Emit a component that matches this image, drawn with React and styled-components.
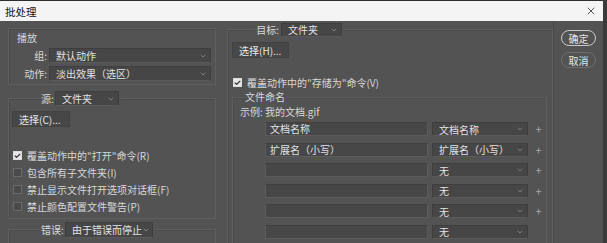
import React from 'react';
import styled, { createGlobalStyle } from 'styled-components';
import { ChevronDown, X, Check } from 'lucide-react';

const GlobalStyle = createGlobalStyle`
  html, body { margin: 0; padding: 0; background: #535353; }
  body { font-family: "Noto Sans CJK SC", "Noto Sans", sans-serif; }
  * { box-sizing: border-box; }
`;

const Window = styled.div`
  width: 607px;
  height: 243px;
  overflow: hidden;
  background: #535353;
  color: #d8d8d8;
  font-size: 10px;
  border-right: 4px solid #3a3a3a;
  display: flex;
  flex-direction: column;
`;

const TitleBar = styled.div`
  height: 21px;
  flex: none;
  background: #f4f4f4;
  border-top: 1px solid #2e2e2e;
  display: flex;
  align-items: center;
  justify-content: space-between;
  padding: 0 6px 0 5px;
  color: #111;
  font-size: 10.5px;
`;

const Body = styled.div`
  flex: 1;
  display: flex;
  padding-left: 8px;
`;

const LeftCol = styled.div`
  width: 208px;
  flex: none;
  display: flex;
  flex-direction: column;
`;

const RightCol = styled.div`
  width: 326px;
  margin-left: 11px;
  flex: none;
`;

const ButtonCol = styled.div`
  flex: 1;
  border-left: 1px solid #484848;
  display: flex;
  flex-direction: column;
  align-items: center;
  padding-top: 9px;
  gap: 6px;
`;

const Group = styled.div`
  margin-top: 7px;
  height: 57px;
  border: 1px solid #5f5f5f;
  box-shadow: inset 1px 1px 0 #4a4a4a;
  padding: 2px 0 0 8px;
`;

const GroupTitle = styled.div`
  height: 14px;
  line-height: 14px;
  margin-bottom: 3px;
`;

const FormRow = styled.div`
  display: flex;
  align-items: center;
  height: 15px;
  margin-bottom: 3px;
`;

const Label = styled.span`
  width: ${p => p.$w}px;
  text-align: right;
  padding-right: 2px;
  white-space: nowrap;
`;

const Frame = styled.fieldset`
  margin: ${p => p.$mt || 0}px ${p => p.$mr || 0}px 0 ${p => p.$ml || 0}px;
  padding: 0 0 0 ${p => p.$pl || 4}px;
  border: 1px solid #5f5f5f;
  box-shadow: inset 1px 1px 0 #4a4a4a;
  height: ${p => p.$h}px;
  min-width: 0;
`;

const Legend = styled.legend`
  margin-left: ${p => p.$ml}px;
  padding: 0 2px 0 0;
  display: flex;
  align-items: center;
  height: ${p => p.$h || 15}px;
  line-height: ${p => p.$h || 15}px;
  background: #535353;
`;

const SelectBox = styled.div`
  width: ${p => p.$w}px;
  height: ${p => p.$h || 15}px;
  background: #464646;
  border: 1px solid #3e3e3e;
  border-bottom-color: #5a5a5a;
  display: flex;
  align-items: center;
  justify-content: space-between;
  padding: 0 3px 0 6px;
  color: #e2e2e2;
  white-space: nowrap;
  svg { color: #9a9a9a; flex: none; }
`;

const Select = ({ w, h, children }) => (
  <SelectBox $w={w} $h={h}>
    <span>{children}</span>
    <ChevronDown size={8} strokeWidth={2} />
  </SelectBox>
);

const FlatButton = styled.div`
  width: ${p => p.$w}px;
  height: 16px;
  background: #474747;
  border: 1px solid #424242;
  display: flex;
  align-items: center;
  padding-left: 6px;
  color: #e6e6e6;
  margin-top: ${p => p.$mt}px;
`;

const CheckRow = styled.div`
  display: flex;
  align-items: center;
  height: 17px;
  gap: 5px;
  padding-left: 1px;
  margin-top: ${p => p.$mt || 0}px;
`;

const Box = styled.span`
  width: 9px;
  height: 9px;
  flex: none;
  border: 1px solid ${p => (p.$on ? '#dcdcdc' : '#6a6a6a')};
  background: ${p => (p.$on ? '#e8e8e8' : '#4a4a4a')};
  display: flex;
  align-items: center;
  justify-content: center;
  svg { color: #333; }
`;

const CheckItem = ({ on, mt, children }) => (
  <CheckRow $mt={mt}>
    <Box $on={on}>{on && <Check size={8} strokeWidth={4} />}</Box>
    <span>{children}</span>
  </CheckRow>
);

const Checks = styled.div`
  margin-top: 20px;
  display: flex;
  flex-direction: column;
`;

const Example = styled.div`
  height: 13px;
  line-height: 13px;
  margin-top: 2px;
  padding-left: 3px;
`;

const NameGrid = styled.div`
  margin: 4px 0 0 28px;
  display: grid;
  grid-template-columns: 163px 96px 13px;
  column-gap: 4px;
  row-gap: 6.5px;
  align-items: center;
`;

const TextInput = styled.div`
  height: 14px;
  background: #474747;
  border: 1px solid #5c5c5c;
  border-top-color: #3f3f3f;
  padding-left: 4px;
  line-height: 12px;
  color: #e2e2e2;
`;

const Plus = styled.span`
  color: #a8a8a8;
  font-size: 11px;
  text-align: center;
  line-height: 14px;
`;

const PillButton = styled.div`
  width: 35px;
  height: 16px;
  border-radius: 8px;
  border: 1px solid ${p => (p.$primary ? '#c8c8c8' : '#6e6e6e')};
  display: flex;
  align-items: center;
  justify-content: center;
  color: #e6e6e6;
`;

const rows = [
  { text: '文档名称', sel: '文档名称', plus: true },
  { text: '扩展名（小写）', sel: '扩展名（小写）', plus: true },
  { text: '', sel: '无', plus: true },
  { text: '', sel: '无', plus: true },
  { text: '', sel: '无', plus: true },
  { text: '', sel: '无', plus: false },
];

export default function App() {
  return (
    <>
      <GlobalStyle />
      <Window>
        <TitleBar>
          <span>批处理</span>
          <X size={12} strokeWidth={1.5} color="#222" />
        </TitleBar>
        <Body>
          <LeftCol>
            <Group>
              <GroupTitle>播放</GroupTitle>
              <FormRow>
                <Label $w={32}>组:</Label>
                <Select w={162}>默认动作</Select>
              </FormRow>
              <FormRow>
                <Label $w={32}>动作:</Label>
                <Select w={162}>淡出效果（选区）</Select>
              </FormRow>
            </Group>
            <Frame $mt={6} $h={128} $pl={3}>
              <Legend $ml={29}>
                <Label $w={14}>源:</Label>
                <Select w={64}>文件夹</Select>
              </Legend>
              <FlatButton $w={58} $mt={5}>选择(C)...</FlatButton>
              <Checks>
                <CheckItem on>覆盖动作中的"打开"命令(R)</CheckItem>
                <CheckItem>包含所有子文件夹(I)</CheckItem>
                <CheckItem>禁止显示文件打开选项对话框(F)</CheckItem>
                <CheckItem>禁止颜色配置文件警告(P)</CheckItem>
              </Checks>
            </Frame>
            <Frame $mt={3} $h={40} $pl={3}>
              <Legend $ml={29}>
                <Label $w={24}>错误:</Label>
                <Select w={88} h={16}>由于错误而停止</Select>
              </Legend>
            </Frame>
          </LeftCol>
          <RightCol>
            <Frame $mt={1} $h={240} $pl={4}>
              <Legend $ml={23}>
                <Label $w={26}>目标:</Label>
                <Select w={61} h={14}>文件夹</Select>
              </Legend>
              <FlatButton $w={57} $mt={5}>选择(H)...</FlatButton>
              <CheckItem on mt={16}>覆盖动作中的"存储为"命令(V)</CheckItem>
              <Frame $mt={0} $h={160} $pl={0} $mr={5}>
                <Legend $ml={8} $h={12}>文件命名</Legend>
                <Example>示例: 我的文档.gif</Example>
                <NameGrid>
                  {rows.map((r, i) => (
                    <React.Fragment key={i}>
                      <TextInput>{r.text}</TextInput>
                      <Select w={96} h={14}>{r.sel}</Select>
                      <Plus>{r.plus ? '+' : ''}</Plus>
                    </React.Fragment>
                  ))}
                </NameGrid>
              </Frame>
            </Frame>
          </RightCol>
          <ButtonCol>
            <PillButton $primary>确定</PillButton>
            <PillButton>取消</PillButton>
          </ButtonCol>
        </Body>
      </Window>
    </>
  );
}
